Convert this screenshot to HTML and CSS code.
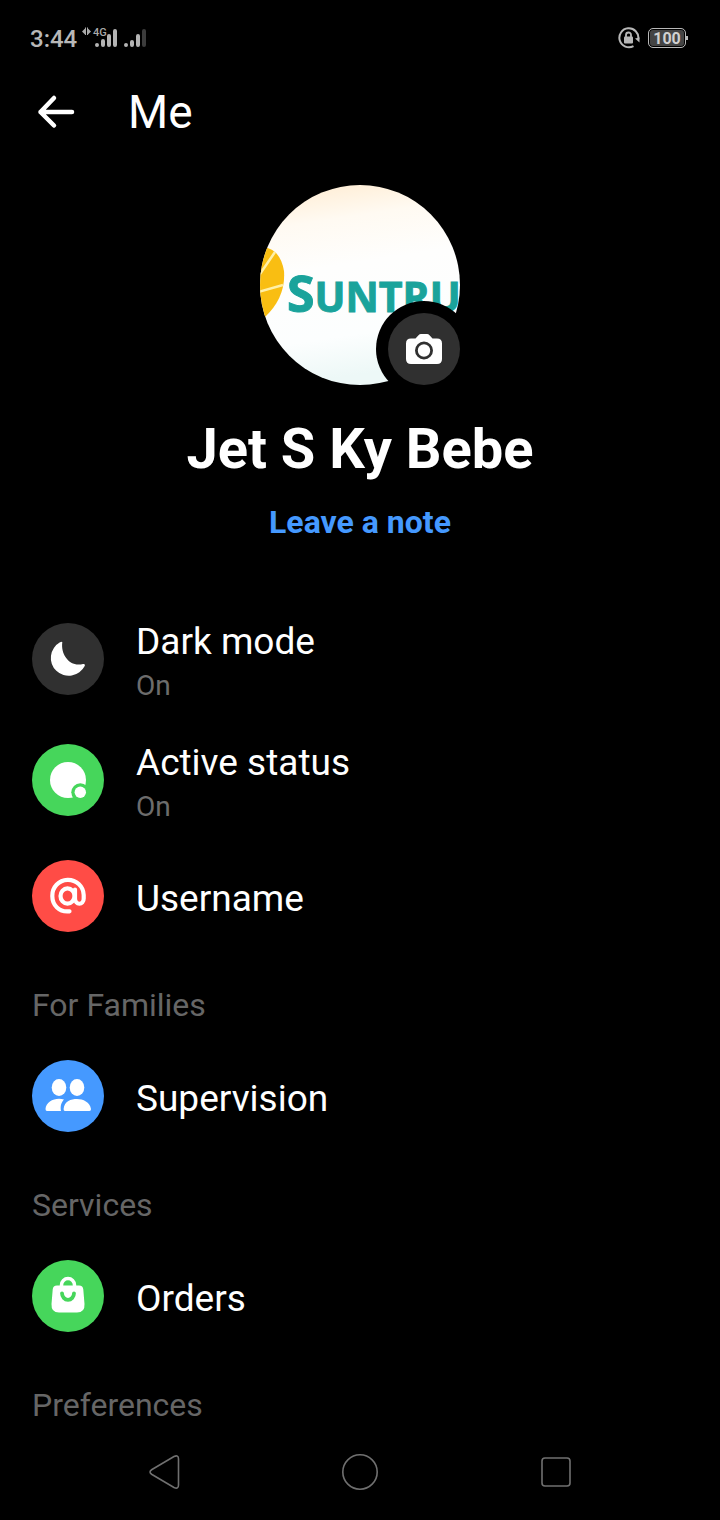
FILE: index.html
```html
<!DOCTYPE html>
<html lang="en">
<head>
<meta charset="utf-8">
<meta name="viewport" content="width=device-width, initial-scale=1">
<title>Me</title>
<link rel="stylesheet" href="styles.css">
</head>
<body>
<div class="status-bar">
  <div class="status-left">
    <span class="clock">3:44</span>
    <svg class="signals" width="66" height="24" viewBox="0 0 66 24" aria-hidden="true">
      <path d="M0 5.500L3 2.500V8.500ZM9 5.500L6 2.500V8.500ZM3 1.500H4V9H3ZM5 1.500H6V9H5Z" fill="#aaa"/>
      <text class="network" x="11" y="10">4G</text>
      <g stroke="#b4b4b4" stroke-width="4" stroke-linecap="round">
        <path d="M15 19V19M21 15V19M27 10V19M33 5V19M44 19V19M50 16V19M56 10V19"/>
        <path d="M62 5V19" stroke="#3c3c3c"/>
      </g>
    </svg>
  </div>
  <div class="status-right">
    <svg width="22" height="22" viewBox="0 0 22 22" aria-hidden="true">
      <path d="M15.500 19.100A9.500 9.500 0 1 1 20.300 12" fill="none" stroke="#b8b8b8" stroke-width="2"/>
      <path d="M17 11.500L21.500 10.500V15.500Z" fill="#b8b8b8"/>
      <rect x="6" y="9.500" width="9" height="7" rx="1" fill="#b8b8b8"/>
      <path d="M8 10V8A2.500 2.500 0 0 1 13 8V10" fill="none" stroke="#b8b8b8" stroke-width="1.800"/>
    </svg>
    <span class="battery">100</span>
  </div>
</div>

<header class="app-bar">
  <button class="back" type="button" aria-label="Back">
    <svg width="40" height="36" viewBox="0 0 40 36" fill="none" stroke="#fff" stroke-width="4.500" stroke-linecap="round" stroke-linejoin="round"><path d="M18 4L4.500 18L18 31.500M4.500 18H36"/></svg>
  </button>
  <h1 class="title">Me</h1>
</header>

<main class="content">
  <section class="profile">
    <div class="avatar">
      <svg width="200" height="200" viewBox="0 0 200 200" role="img" aria-label="Profile picture">
        <defs>
          <clipPath id="round"><circle cx="100" cy="100" r="100"/></clipPath>
          <linearGradient id="sky" x1="0" y1="0" x2="0.15" y2="1">
            <stop offset="0" stop-color="#ffebcf"/>
            <stop offset="0.22" stop-color="#fffaf2"/>
            <stop offset="0.45" stop-color="#fefefd"/>
            <stop offset="0.8" stop-color="#fcfefe"/>
            <stop offset="1" stop-color="#edf8f7"/>
          </linearGradient>
        </defs>
        <g clip-path="url(#round)">
          <rect width="200" height="200" fill="url(#sky)"/>
          <path d="M0 62Q20 62 24 86Q26 112 5 132H-10V62Z" fill="#f9be12"/>
          <path d="M0 89L15 67M-2 107L23 100" stroke="#fff0a8" stroke-width="2.500"/>
          <text class="brand" x="27" y="127">S<tspan class="brand-small">UNTRU</tspan></text>
        </g>
      </svg>
      <button class="camera" type="button" aria-label="Change photo">
        <svg width="36" height="30" viewBox="0 0 36 30"><path d="M5 4.500H9.500L12.500 1.200Q13.500 0 15 0H21Q22.500 0 23.500 1.200L26.500 4.500H31Q36 4.500 36 9.500V25Q36 30 31 30H5Q0 30 0 25V9.500Q0 4.500 5 4.500Z" fill="#fff"/><circle cx="18" cy="16.500" r="7.600" fill="none" stroke="#303030" stroke-width="2.800"/></svg>
      </button>
    </div>
    <h2 class="name">Jet S Ky Bebe</h2>
    <button class="note" type="button">Leave a note</button>
  </section>

  <button class="row tall" type="button">
    <svg class="icon dark" viewBox="0 0 72 72"><path d="M30.300 19.300C28.500 32 38 44.500 51 41C52.500 40.600 53.300 41.500 52.700 43A17.900 17.900 0 1 1 28 19.300Q30.400 18 30.300 19.300Z" fill="#fff"/></svg>
    <span class="text"><span class="label">Dark mode</span><span class="value">On</span></span>
  </button>
  <button class="row tall" type="button">
    <svg class="icon green" viewBox="0 0 72 72"><circle cx="36" cy="36" r="18" fill="#fff"/><circle cx="48.300" cy="48.300" r="9" fill="#46d65b"/><circle cx="48.300" cy="48.300" r="5.700" fill="#fff"/></svg>
    <span class="text"><span class="label">Active status</span><span class="value">On</span></span>
  </button>
  <button class="row" type="button">
    <svg class="icon red" viewBox="0 0 72 72" fill="none" stroke="#fff" stroke-width="4.200" stroke-linecap="round"><path d="M37.500 51.300C27 52.500 20.300 45 20.300 36A15.700 15.700 0 0 1 51.700 35V38.500C51.700 45.500 43 45.500 43 38.500V29.500"/><ellipse cx="35.500" cy="36" rx="7" ry="7.700"/></svg>
    <span class="text"><span class="label">Username</span></span>
  </button>

  <h3 class="section">For Families</h3>
  <button class="row" type="button">
    <svg class="icon blue" viewBox="0 0 72 72" fill="#fff"><ellipse cx="27" cy="27.500" rx="7.300" ry="8.500"/><ellipse cx="45" cy="27.500" rx="7.300" ry="8.500"/><path d="M32 39.500C24 37 14 41 13.500 49Q13.500 51 15 51H29C28 46 29.500 42 32 39.500ZM33 51Q31.500 51 31.600 49C32.500 41 39 39 45 39C51 39 58 42 59 49Q59 51 57.500 51Z"/></svg>
    <span class="text"><span class="label">Supervision</span></span>
  </button>

  <h3 class="section">Services</h3>
  <button class="row" type="button">
    <svg class="icon green" viewBox="0 0 72 72" fill="none"><path d="M25 25.500H47Q51 25.500 51.300 29.500L52.500 44Q53 52.500 45 52.500H27Q19 52.500 19.500 44L20.700 29.500Q21 25.500 25 25.500Z" fill="#fff"/><path d="M29.500 27V25A6.500 6.500 0 0 1 42.500 25V27" stroke="#fff" stroke-width="3.500"/><path d="M30 33.300A6 6.500 0 0 0 42 33.300" stroke="#46d65b" stroke-width="3.800" stroke-linecap="round"/></svg>
    <span class="text"><span class="label">Orders</span></span>
  </button>

  <h3 class="section">Preferences</h3>
</main>

<nav class="nav-bar" aria-label="System">
  <button type="button" aria-label="Back"><svg width="36" height="36" viewBox="0 0 36 36"><path d="M6 15.500L28 2.500Q32.500 0.500 32.500 5V31Q32.500 35.500 28 33.500L6 20.500Q2 18 6 15.500Z"/></svg></button>
  <button type="button" aria-label="Home"><svg width="36" height="36" viewBox="0 0 36 36"><circle cx="18" cy="18" r="17.200"/></svg></button>
  <button type="button" aria-label="Recent apps"><svg width="36" height="36" viewBox="0 0 36 36"><rect x="4" y="4" width="28" height="28" rx="3"/></svg></button>
</nav>
</body>
</html>
```
FILE: styles.css
```css
* { box-sizing: border-box; }

body {
  margin: 0;
  min-height: 100vh;
  display: flex;
  flex-direction: column;
  background: #000;
  color: #fff;
  font-family: Roboto, "Liberation Sans", sans-serif;
}

button {
  margin: 0;
  padding: 0;
  border: 0;
  background: none;
  color: inherit;
  font: inherit;
  text-align: left;
  cursor: pointer;
}

svg { display: block; }

.status-bar {
  display: flex;
  justify-content: space-between;
  align-items: center;
  height: 76px;
  padding: 0 34px 0 30px;
  color: #b8b8b8;
}

.status-left { display: flex; align-items: center; gap: 5px; }
.clock { font-size: 24px; line-height: 28px; font-weight: 500; padding-top: 2px; }
.network { font: 500 11px Roboto, sans-serif; fill: #aaa; }
.status-right { display: flex; align-items: center; gap: 8px; }

.battery {
  position: relative;
  width: 38px;
  height: 20px;
  border: 1px solid #b8b8b8;
  border-radius: 5px;
  background: #444;
  box-shadow: inset 0 0 0 1px #000;
  color: #d0d0d0;
  font-size: 16px;
  line-height: 19px;
  font-weight: 700;
  text-align: center;
}

.battery::after {
  content: "";
  position: absolute;
  right: -3px;
  top: 7px;
  width: 2px;
  height: 4px;
  background: #b8b8b8;
}

.app-bar {
  display: flex;
  align-items: center;
  gap: 52px;
  height: 72px;
  padding: 0 36px;
}

.title { margin: 0; font-size: 46px; line-height: 56px; font-weight: 400; }

.content { flex: 1; display: flex; flex-direction: column; }

.profile {
  display: flex;
  flex-direction: column;
  align-items: center;
  padding: 37px 32px 57px;
}

.avatar { position: relative; }
.brand {
  font: 700 50px "Open Sans", "Noto Sans", sans-serif;
  fill: #1aa39b;
  stroke: #1aa39b;
  stroke-width: 1px;
}
.brand-small { font-size: 41px; }

.camera {
  position: absolute;
  right: 0;
  bottom: 0;
  display: flex;
  align-items: center;
  justify-content: center;
  width: 72px;
  height: 72px;
  border-radius: 50%;
  background: #303030;
  box-shadow: 0 0 0 12px #000;
}

.name { margin: 31px 0 20px; font-size: 56px; line-height: 66px; font-weight: 700; }
.note { color: #4599ff; font-size: 32px; line-height: 40px; font-weight: 700; }

.row {
  display: flex;
  align-items: center;
  gap: 32px;
  width: 100%;
  min-height: 110px;
  padding: 0 32px;
}

.tall { min-height: 120px; margin-bottom: 1px; }

.icon { flex: none; width: 72px; height: 72px; border-radius: 50%; }
.dark { background: #303030; }
.green { background: #46d65b; }
.red { background: #ff4c46; }
.blue { background: #4599ff; }

.text { display: flex; flex-direction: column; padding-top: 6px; }
.label { font-size: 37px; line-height: 48px; }
.value { color: #6c6c6c; font-size: 28px; line-height: 40px; }

.section {
  margin: 0;
  padding: 34px 32px 16px;
  color: #666;
  font-size: 32px;
  line-height: 40px;
  font-weight: 400;
}

.section:last-child { padding-bottom: 0; }

.nav-bar {
  display: flex;
  align-items: center;
  justify-content: space-around;
  height: 95px;
  padding: 0 66px 2px;
  background: #000;
}

.nav-bar svg { fill: none; stroke: #707070; stroke-width: 1.6px; }
```
